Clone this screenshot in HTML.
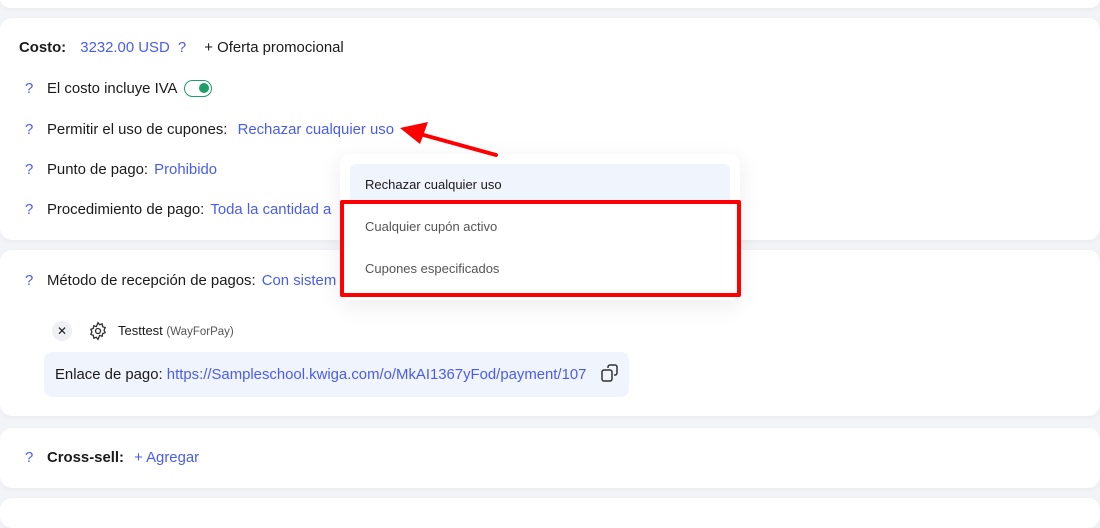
<!DOCTYPE html>
<html><head><meta charset="utf-8"><style>
*{margin:0;padding:0;box-sizing:border-box}
body{width:1100px;height:509px;background:#f3f4f7;font-family:"Liberation Sans",sans-serif;font-size:14.9px;color:#1a1a1a;position:relative;overflow:hidden}
.card{position:absolute;left:0;width:1100px;background:#fff;border-radius:12px;box-shadow:0 2px 6px rgba(0,0,0,.04)}
.t{position:absolute;white-space:nowrap}
.q{color:#4a5cf0}
.bl{color:#4a5cf0}
</style></head><body>
<div class="card" style="top:-12px;height:20px"></div>
<div class="card" style="top:18px;height:222px"></div>
<div class="card" style="top:250px;height:166px"></div>
<div class="card" style="top:428px;height:60px"></div>
<div class="card" style="top:498px;height:30px"></div>

<div class="t" style="left:19px;top:40px"><b>Costo:</b> <span class="bl" style="margin-left:10px">3232.00 USD</span> <span class="q" style="margin-left:4px">?</span> <span style="margin-left:14px">+ Oferta promocional</span></div>
<div class="t q" style="left:25px;top:81px">?</div><div class="t" style="left:47px;top:81px">El costo incluye IVA</div>
<div style="position:absolute;left:184px;top:80px;width:28px;height:17px;border:1.5px solid #1f9d6b;border-radius:9px"><div style="position:absolute;right:2px;top:2px;width:10px;height:10px;border-radius:50%;background:#1f9d6b"></div></div>
<div class="t q" style="left:25px;top:122px">?</div><div class="t" style="left:47px;top:122px">Permitir el uso de cupones: <span class="bl" style="margin-left:6px">Rechazar cualquier uso</span></div>
<div class="t q" style="left:25px;top:162px">?</div><div class="t" style="left:47px;top:162px">Punto de pago: <span class="bl" style="margin-left:2px">Prohibido</span></div>
<div class="t q" style="left:25px;top:202px">?</div><div class="t" style="left:47px;top:202px">Procedimiento de pago: <span class="bl" style="margin-left:2px">Toda la cantidad a</span></div>
<div class="t q" style="left:25px;top:273px">?</div><div class="t" style="left:47px;top:273px">Método de recepción de pagos: <span class="bl" style="margin-left:2px">Con sistem</span></div>
<div style="position:absolute;left:52px;top:321px;width:20px;height:20px;border-radius:50%;background:#eef0f3;font-size:12px;text-align:center;line-height:20px">✕</div>
<svg style="position:absolute;left:88px;top:321px" width="20" height="20" viewBox="0 0 24 24" fill="none" stroke="#333" stroke-width="1.6"><circle cx="12" cy="12" r="3"/><path d="M12 2l2 2.5 3-1 .6 3.2 3 1.2-1.3 3 1.3 3-3 1.2-.6 3.2-3-1L12 22l-2-2.5-3 1-.6-3.2-3-1.2 1.3-3-1.3-3 3-1.2.6-3.2 3 1z"/></svg>
<div class="t" style="left:118px;top:323px;font-size:13px">Testtest <span style="font-size:11.5px;color:#555">(WayForPay)</span></div>
<div style="position:absolute;left:44px;top:352px;width:585px;height:45px;background:#f0f4fd;border-radius:8px"></div>
<div class="t" style="left:55px;top:367px">Enlace de pago: <span class="bl">https://Sampleschool.kwiga.com/o/MkAI1367yFod/payment/107</span></div>
<svg style="position:absolute;left:600px;top:363px" width="20" height="20" viewBox="0 0 20 20" fill="none" stroke="#333" stroke-width="1.5"><rect x="2" y="7" width="10" height="11" rx="2"/><path d="M8 5V4a2 2 0 012-2h5a2 2 0 012 2v6a2 2 0 01-2 2h-1"/></svg>
<div class="t q" style="left:25px;top:450px">?</div><div class="t" style="left:47px;top:450px"><b>Cross-sell:</b> <span class="bl" style="margin-left:6px">+ Agregar</span></div>

<div style="position:absolute;left:340px;top:154px;width:400px;height:146px;background:#fff;border-radius:10px;box-shadow:0 6px 24px rgba(0,0,0,.08)"></div>
<div style="position:absolute;left:350px;top:164px;width:380px;height:40px;background:#f0f4fd;border-radius:6px"></div>
<div class="t" style="left:365px;top:177px;font-size:13px">Rechazar cualquier uso</div>
<div style="position:absolute;left:340px;top:200px;width:401px;height:97px;border:4px solid #f00;border-radius:2px"></div>
<div class="t" style="left:365px;top:219px;font-size:13px;color:#555">Cualquier cupón activo</div>
<div class="t" style="left:365px;top:261px;font-size:13px;color:#555">Cupones especificados</div>
<svg style="position:absolute;left:0;top:0" width="1100" height="509"><line x1="496" y1="155" x2="420" y2="134" stroke="#f00" stroke-width="4" stroke-linecap="round"/><polygon points="400,128 428,122 420,144" fill="#f00"/></svg>
</body></html>
